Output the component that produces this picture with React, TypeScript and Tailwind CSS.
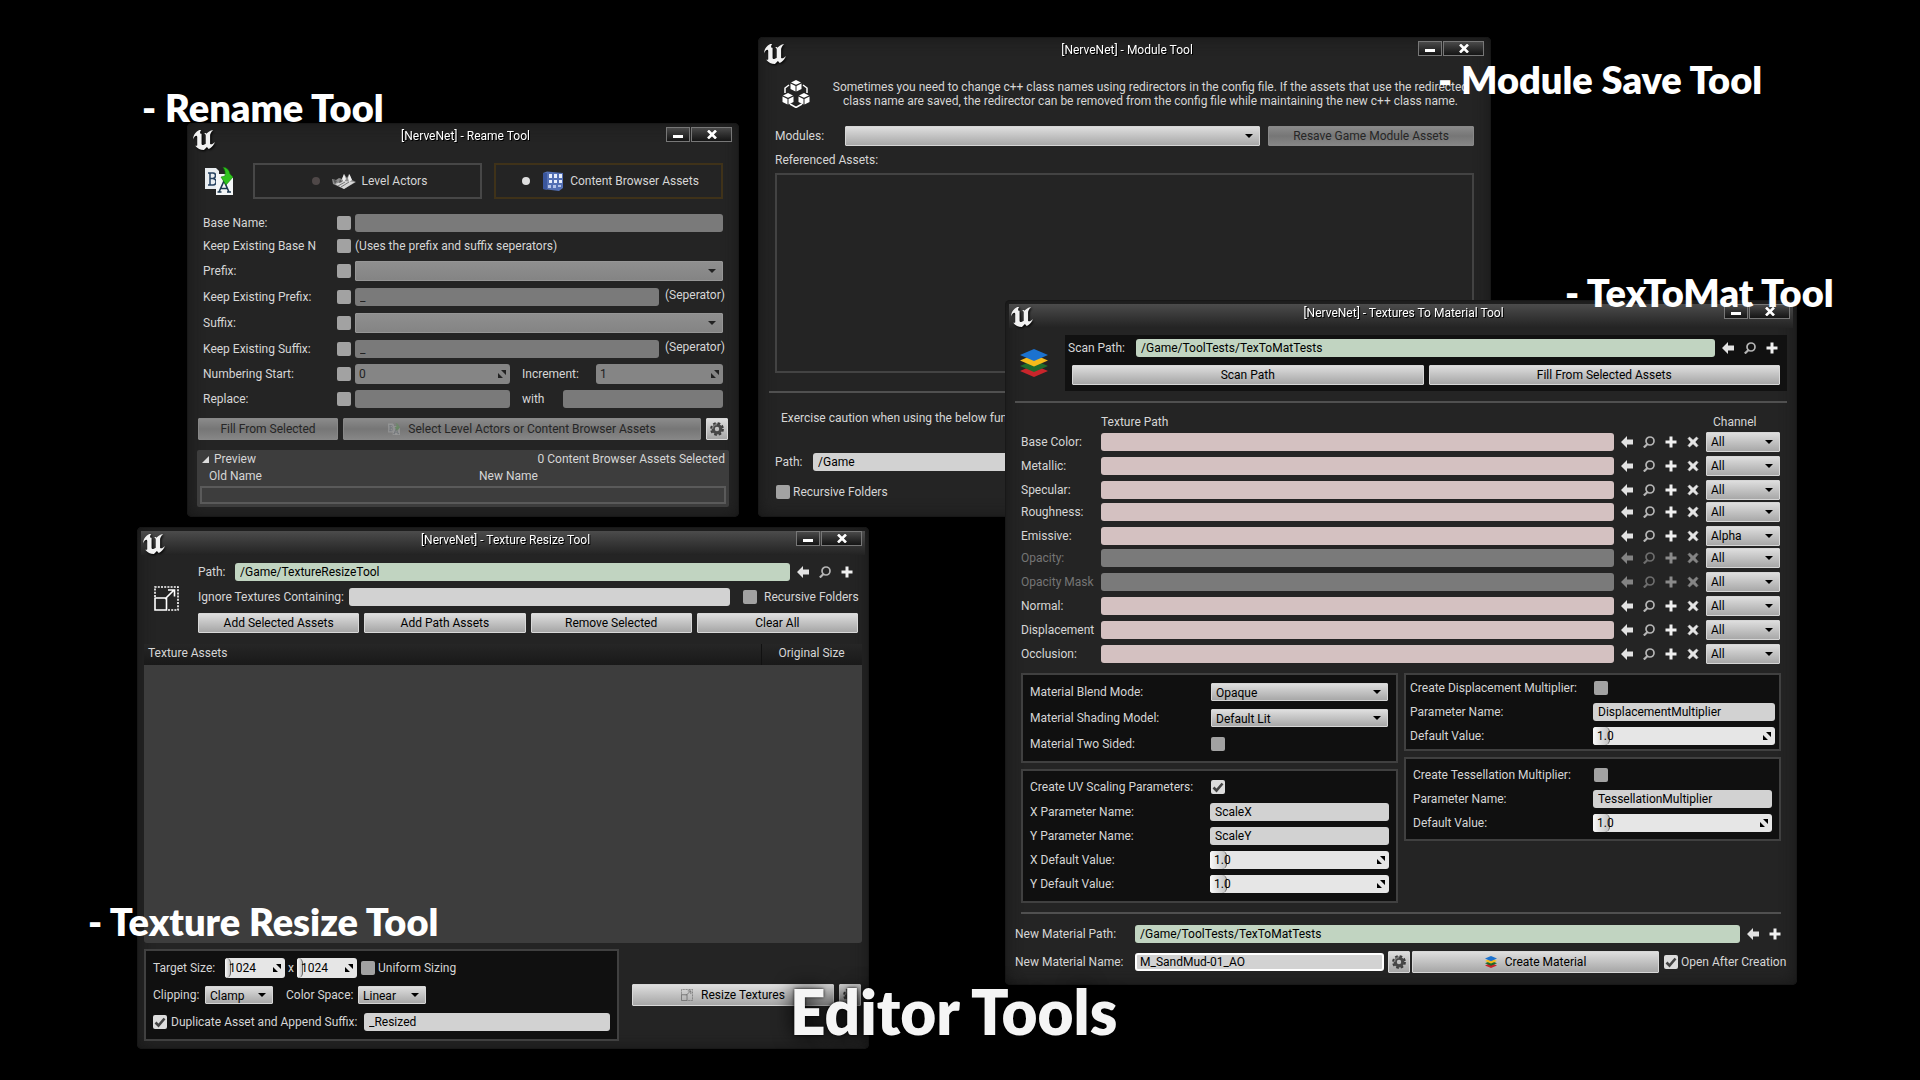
import React from 'react';
import clsx from 'clsx';

type BoxProps = { className?: string };

/* ---------- icons ---------- */

const UnrealLogo = () => (
  <svg viewBox="4.6 5.4 14.7 14" preserveAspectRatio="none" className="w-[22px] h-5 drop-shadow-[1px_1px_1px_#000]" fill="#f2f2f2">
    <path d="M19.13 13.729c-.206.997-1.126 3.557-4.06 4.942l-1.179-1.325-1.988 2a7.338 7.338 0 01-5.804-2.978 2.859 2.859 0 00.65.123c.326.006.678-.114.678-.66v-5.394a.89.89 0 00-1.116-.89c-.92.212-1.656 2.509-1.656 2.509a7.304 7.304 0 012.528-5.597 7.408 7.408 0 013.73-1.721c-1.006.573-1.57 1.507-1.57 2.29 0 1.262.76 1.109.984.923v7.28a1.157 1.157 0 00.148.256 1.075 1.075 0 00.88.445c.76 0 1.747-.868 1.747-.868V9.172c0-.6-.452-1.324-.905-1.572 0 0 .838-.149 1.484.346a5.537 5.537 0 01.387-.425c1.508-1.48 2.929-1.902 4.112-2.112 0 0-2.151 1.69-2.151 3.96 0 1.687.043 5.801.043 5.801.799.771 1.986-.342 3.059-1.441z" />
  </svg>
);

const RenameIcon = ({ className = 'w-7 h-7' }: BoxProps) => (
  <svg viewBox="0 0 28 28" className={className}>
    <path d="M0 1h11l3 3v18H0z" fill="#e9edf0" />
    <path d="M3 6h5q2.500 0 2.500 2.500T8 11.500Q11 12 11 14.500 11 18 8 18H3M5 6v12M5 11.500h3" fill="none" stroke="#233f5e" strokeWidth="1.500" />
    <path d="M11 7h13l4 4v17H11z" fill="#f4f6f7" />
    <path d="M14 25l5-11 5 11M16 21.500h6M12.500 25h4M22 25h4" fill="none" stroke="#1d3850" strokeWidth="1.600" />
    <path d="M18 0q6 1 7 7l3 3-7 8-5-8 4-1Q21 4 18 0z" fill="#2fc41d" stroke="#16790d" strokeWidth=".6" />
  </svg>
);

const LandscapeIcon = () => (
  <svg viewBox="0 0 24 16" className="w-6 h-4">
    <path d="M0 6l4 1 3-2 3 1 2-5 3 4 2-4 3 6 4 2-12 7-11-5z" fill="#8d8d8d" />
    <path d="M3 11l9-3 11 1-11 7z" fill="#d6d6d6" />
    <path d="M10 6l2-5 2 5-2 3zM16 5l1.500-4 2.500 6-3 2z" fill="#efefef" />
    <path d="M1 6l4 2-2 3zM8 6l2 3-3 1z" fill="#5c5c5c" />
    <path d="M6 13l7-4M9 14l8-5" stroke="#777" />
  </svg>
);

const AssetsIcon = () => (
  <svg viewBox="0 0 22 21" className="w-[22px] h-[21px]">
    <path d="M1 2l4-1.500 16 1.500v15l-4 3L1 18z" fill="#5470b4" />
    <path d="M1 2l4 0v17l-4-1z" fill="#3a569c" />
    <g fill="#e7edfb">
      <rect x="7" y="3" width="3" height="4" /><rect x="12" y="3" width="3" height="4" /><rect x="17" y="3" width="3" height="4" />
      <rect x="7" y="9" width="3" height="3" /><rect x="12" y="9" width="3" height="3" /><rect x="17" y="9" width="3" height="3" />
      <rect x="6" y="14" width="3" height="3" fill="#b3c3ea" /><rect x="11" y="14" width="3" height="3" fill="#b3c3ea" /><rect x="16" y="14" width="3" height="2" fill="#b3c3ea" />
    </g>
  </svg>
);

const Cube = ({ x, y }: { x: number; y: number }) => (
  <g fill="#fff">
    <path d={`M${x} ${y - 6}l5 2.500-5 2.300-5-2.300z`} />
    <path d={`M${x - 5.5} ${y - 2.5}l5 2.400v5.600l-5-2.500z`} />
    <path d={`M${x + 5.5} ${y - 2.5}l-5 2.400v5.600l5-2.500z`} />
  </g>
);

const ModuleIcon = () => (
  <svg viewBox="0 0 28 28" className="w-7 h-7 shrink-0">
    <path d="M7 5L3 8v5M21 5l4 3v5M8 24l6 3.500 6-3.500" fill="none" stroke="#fff" strokeWidth="1.500" />
    <Cube x={14} y={6} />
    <Cube x={6} y={19} />
    <Cube x={22} y={19} />
  </svg>
);

const LayersIcon = ({ className = 'w-7 h-7' }: BoxProps) => (
  <svg viewBox="0 0 28 28" className={className}>
    <path d="M0 22l14-6 14 6-14 6z" fill="#c9252b" />
    <path d="M0 17l14-6 14 6-14 6z" fill="#1f6a2c" />
    <path d="M0 11.500l14-6 14 6-14 6z" fill="#f5bb1b" />
    <path d="M0 6l14-6 14 6-14 6z" fill="#1b72cf" />
  </svg>
);

const ResizeIcon = ({ className = 'w-[25px] h-[25px] text-white' }: BoxProps) => (
  <svg viewBox="0 0 25 25" className={className} fill="none" stroke="currentColor" strokeWidth="1.600">
    <path d="M1 11V1h23v23H14" strokeDasharray="2 1.200" />
    <path d="M1 11.500v12.500h11.500V12H1M11 13l9-9M14 4h6.500v6.500" />
  </svg>
);

const Gear = () => (
  <svg viewBox="0 0 14 14" className="w-3.5 h-3.5">
    <circle cx="7" cy="7" r="5.800" fill="none" stroke="#3c3c3c" strokeWidth="2.200" strokeDasharray="2.600 1.950" />
    <circle cx="7" cy="7" r="3.800" fill="none" stroke="#484848" strokeWidth="3.200" />
    <path d="M7 2.500A4.500 4.500 0 002.500 7" fill="none" stroke="#808080" strokeWidth="1.500" />
  </svg>
);

const actionPaths = {
  use: <path d="M0 6l6-6v3.500h6v5H6V12z" fill="#e2e2e2" />,
  browse: (
    <g fill="none" stroke="#b5b5b5" strokeWidth="1.700">
      <circle cx="7" cy="5" r="4" />
      <path d="M4.500 8L.8 11.500" strokeWidth="2.200" />
    </g>
  ),
  add: <path d="M4.500.5h3v4h4v3h-4v4h-3v-4h-4v-3h4z" fill="#f0f0f0" />,
  clear: <path d="M2.500 1L6 4.200 9.500 1 11 2.500 8 6l3 3.500L9.500 11 6 7.800 2.500 11 1 9.500 4 6 1 2.500z" fill="#e6e6e6" stroke="#e6e6e6" strokeWidth=".6" />,
};

const actionLabels = { use: 'Use selected', browse: 'Browse', add: 'Add', clear: 'Clear' };

type Action = keyof typeof actionPaths;

const Actions = ({ list, off, className }: { list: Action[]; off?: boolean; className?: string }) => (
  <div className={clsx('flex gap-2.5 shrink-0 ml-[7px]', off && 'opacity-50', className)}>
    {list.map((a) => (
      <button key={a} type="button" aria-label={actionLabels[a]} disabled={off} className="w-3 h-3">
        <svg viewBox="0 0 12 12" className="w-3 h-3">{actionPaths[a]}</svg>
      </button>
    ))}
  </div>
);

/* ---------- controls ---------- */

const Label = ({ htmlFor, children, className }: { htmlFor?: string; children: React.ReactNode; className?: string }) => (
  <label htmlFor={htmlFor} className={clsx('shrink-0 whitespace-nowrap', className)}>{children}</label>
);

const tones = {
  light: 'bg-[#d2d2d2]',
  green: 'bg-[#c1d4c1]',
  pink: 'bg-[#d4c1c1]',
  off: 'bg-[#7a7a7a]',
  focus: 'bg-[#d2d2d2] border-2 border-white !px-[3px]',
};

interface TextProps {
  id: string;
  value?: string;
  tone?: keyof typeof tones;
  className?: string;
  label?: string;
}

const TextBox = ({ id, value = '', tone = 'light', className = 'flex-1', label }: TextProps) => (
  <input id={id} aria-label={label} type="text" defaultValue={value} disabled={tone === 'off'}
    className={clsx('h-[18px] min-w-0 rounded-[3px] px-[5px] text-black outline-none disabled:text-[#222]', tones[tone], className)} />
);

const Spin = ({ id, value, off, className = 'flex-1', height = 'h-[18px]', thumb = 'w-[17px]', label }: {
  id: string; value: string; off?: boolean; className?: string; height?: string; thumb?: string; label?: string;
}) => (
  <div className={clsx('relative min-w-0 rounded-[3px] overflow-hidden', height, off ? 'bg-[#858585]' : 'bg-[#e6e6e6]', className)}>
    {!off && <span className={clsx('absolute left-0 inset-y-0 rounded-r-[5px] border-r border-[#666] bg-linear-to-r from-[#fafafa] to-[#c4c4c4]', thumb)} />}
    <input id={id} aria-label={label} type="text" defaultValue={value} disabled={off}
      className={clsx('relative block w-full h-full px-1 bg-transparent outline-none', off ? 'text-[#222]' : 'text-black')} />
    <svg viewBox="0 0 8 8" className={clsx('absolute right-1 top-1/2 -mt-1 w-2 h-2', off ? 'text-[#222]' : 'text-black')}>
      <path d="M3 0h5v5zM0 3v5h5z" fill="currentColor" />
    </svg>
  </div>
);

const Check = ({ id, checked, label }: { id: string; checked?: boolean; label?: string }) => (
  <span className="relative w-3.5 h-3.5 shrink-0">
    <input id={id} type="checkbox" aria-label={label} defaultChecked={checked}
      className="peer block appearance-none w-3.5 h-3.5 rounded-[2px] bg-[#a2a2a2] checked:bg-[#dcdcdc]" />
    <svg viewBox="0 0 14 14" className="absolute inset-0 w-3.5 h-3.5 pointer-events-none opacity-0 peer-checked:opacity-100">
      <path d="M2.500 7.500l3 3L11.500 3.500" fill="none" stroke="#444" strokeWidth="2.600" />
    </svg>
  </span>
);

const Select = ({ id, value, off, className = 'flex-1', height = 'h-[18px]', label }: {
  id: string; value?: string; off?: boolean; className?: string; height?: string; label?: string;
}) => (
  <div className={clsx('relative min-w-0', height, className)}>
    <select id={id} aria-label={label} disabled={off}
      className={clsx('block appearance-none w-full h-full pl-1 rounded-[1px] border outline-none text-black disabled:opacity-100',
        off ? 'bg-linear-to-b from-[#8f8f8f] to-[#848484] border-[#969696]' : 'bg-linear-to-b from-[#dedede] to-[#a8a8a8] border-[#d6d6d6]')}>
      {value && <option>{value}</option>}
    </select>
    <svg viewBox="0 0 8 4" className={clsx('absolute right-[7px] top-1/2 -mt-0.5 w-2 h-1 pointer-events-none', off ? 'text-[#222]' : 'text-black')}>
      <path d="M0 0h8L4 4z" fill="currentColor" />
    </svg>
  </div>
);

const Button = ({ children, off, className, height = 'h-5', label }: {
  children?: React.ReactNode; off?: boolean; className?: string; height?: string; label?: string;
}) => (
  <button type="button" disabled={off} aria-label={label}
    className={clsx('flex items-center justify-center whitespace-nowrap rounded-[1px] border', height,
      off
        ? 'bg-linear-to-b from-[#8a8a8a] via-[#767676] to-[#868686] border-[#888] text-[#262626]'
        : 'bg-linear-to-b from-[#dedede] to-[#a6a6a6] border-[#d8d8d8] text-black', className)}>
    {children}
  </button>
);

const GearButton = () => (
  <Button label="Settings" height="h-[22px]" className="w-[22px] shrink-0"><Gear /></Button>
);

const Rule = ({ className }: BoxProps) => <div className={clsx('h-0.5 bg-[#505050]', className)} />;

/* ---------- window frame ---------- */

const ToolWindow = ({ title, active, className, children }: {
  title: string; active?: boolean; className: string; children: React.ReactNode;
}) => (
  <section className={clsx('absolute rounded-[5px] bg-[#242424] shadow-[inset_0_0_16px_#161616,inset_0_0_0_1px_#1a1a1a]', className)}>
    <header className={clsx('mx-1 mt-1 h-6 grid grid-cols-[74px_1fr_69px] items-start', active && 'bg-linear-to-b from-[#4c4c4c] to-[#232323]')}>
      <div className="pl-0.5 pt-[3px]"><UnrealLogo /></div>
      <h2 className="text-center leading-[18px] text-white drop-shadow-[1px_1px_0_#000]">{title}</h2>
      <div className="flex gap-px w-[66px] text-white">
        <button type="button" aria-label="Minimize" className="w-6 h-[15px] border border-[#777] bg-linear-to-b from-[#4a4a4a] to-[#151515] flex items-end justify-center pb-[3px]">
          <span className="w-2.5 h-[3px] bg-white" />
        </button>
        <button type="button" aria-label="Close" className="w-[41px] h-[15px] border border-[#777] bg-linear-to-b from-[#4a4a4a] to-[#151515] flex items-center justify-center">
          <svg viewBox="0 0 10 9" className="w-2.5 h-[9px]"><path d="M1 0.500l8 8M9 0.500l-8 8" stroke="#fff" strokeWidth="2.600" /></svg>
        </button>
      </div>
    </header>
    {children}
  </section>
);

const Panel = ({ className, children }: { className?: string; children: React.ReactNode }) => (
  <div className={clsx('border-2 border-[#404040] bg-[#101010]', className)}>{children}</div>
);

/* ---------- rename tool ---------- */

const RenameRow = ({ id, label, height = 'h-6', children }: { id: string; label: string; height?: string; children: React.ReactNode }) => (
  <div className={clsx('flex items-center', height)}>
    <Label htmlFor={id} className="w-[134px]">{label}</Label>
    <Check id={id} />
    <div className="flex flex-1 items-center min-w-0 ml-1">{children}</div>
  </div>
);

const SourceOption = ({ icon, label, selected }: { icon: React.ReactNode; label: string; selected?: boolean }) => (
  <label className={clsx('flex-1 h-9 flex items-center justify-center border-2 gap-1.5 pl-1', selected ? 'border-[#3f3219]' : 'border-[#474747]')}>
    <input type="radio" name="source" defaultChecked={selected}
      className="appearance-none w-2 h-2 mr-1.5 rounded-full bg-[#4f4848] checked:bg-[#dedede]" />
    {icon}
    <span>{label}</span>
  </label>
);

const Separator = () => <span className="mb-1 pl-1.5 w-16 shrink-0 whitespace-nowrap">(Seperator)</span>;

const RenameTool = () => (
  <ToolWindow title="[NerveNet] - Reame Tool" className="left-[187px] top-[123px] w-[552px]">
    <div className="pt-3 pl-[18px] pr-4 flex items-center">
      <RenameIcon className="w-7 h-7 mr-5 shrink-0" />
      <div className="flex flex-1 gap-3">
        <SourceOption icon={<LandscapeIcon />} label="Level Actors" />
        <SourceOption icon={<AssetsIcon />} label="Content Browser Assets" selected />
      </div>
    </div>

    <div className="mt-3 px-4">
      <RenameRow id="base" label="Base Name:"><TextBox id="base-v" tone="off" label="Base name" /></RenameRow>
      <RenameRow id="keep-base" label="Keep Existing Base N" height="h-[22px]">(Uses the prefix and suffix seperators)</RenameRow>
      <RenameRow id="prefix" label="Prefix:" height="h-7"><Select id="prefix-v" off height="h-5" label="Prefix" /></RenameRow>
      <RenameRow id="keep-prefix" label="Keep Existing Prefix:"><TextBox id="keep-prefix-v" tone="off" value="_" label="Prefix separator" /><Separator /></RenameRow>
      <RenameRow id="suffix" label="Suffix:" height="h-7"><Select id="suffix-v" off height="h-5" label="Suffix" /></RenameRow>
      <RenameRow id="keep-suffix" label="Keep Existing Suffix:"><TextBox id="keep-suffix-v" tone="off" value="_" label="Suffix separator" /><Separator /></RenameRow>
      <RenameRow id="numbering" label="Numbering Start:" height="h-[26px]">
        <Spin id="numbering-v" value="0" off height="h-5" className="w-[155px]" label="Numbering start" />
        <Label htmlFor="increment" className="ml-3">Increment:</Label>
        <Spin id="increment" value="1" off height="h-5" className="w-[127px] ml-auto" />
      </RenameRow>
      <RenameRow id="replace" label="Replace:">
        <TextBox id="replace-v" tone="off" className="w-[155px]" label="Replace text" />
        <Label htmlFor="with" className="ml-3">with</Label>
        <TextBox id="with" tone="off" className="w-[160px] ml-auto" />
      </RenameRow>
    </div>

    <div className="mt-[7px] mx-[11px] flex gap-[5px]">
      <Button off height="h-[22px]" className="w-[140px]">Fill From Selected</Button>
      <Button off height="h-[22px]" className="flex-1">
        <RenameIcon className="w-3 h-3 mr-2 opacity-20" />Select Level Actors or Content Browser Assets
      </Button>
      <GearButton />
    </div>

    <div className="mt-2.5 mx-2.5 mb-2.5 rounded-[2px] bg-[#3d3d3d] pb-[3px]">
      <div className="flex items-center h-[18px] pl-[5px] pr-1">
        <svg viewBox="0 0 7 7" className="w-[7px] h-[7px] mr-[5px]"><path d="M7 0v7H0z" fill="#ddd" /></svg>
        <span>Preview</span>
        <span className="ml-auto">0 Content Browser Assets Selected</span>
      </div>
      <div className="flex h-[18px] leading-4 pl-3">
        <span className="w-[270px]">Old Name</span>
        <span>New Name</span>
      </div>
      <div className="mx-[3px] h-[18px] border-2 border-[#5a5a5a]" />
    </div>
  </ToolWindow>
);

/* ---------- module tool ---------- */

const ModuleTool = () => (
  <ToolWindow title="[NerveNet] - Module Tool" className="left-[758px] top-[37px] w-[733px] pb-[17px]">
    <div className="pt-[15px] pl-6 pr-4 flex items-center gap-4">
      <ModuleIcon />
      <p className="flex-1 text-center leading-[14px] whitespace-nowrap">
        Sometimes you need to change c++ class names using redirectors in the config file. If the assets that use the redirected
        <br />
        class name are saved, the redirector can be removed from the config file while maintaining the new c++ class name.
      </p>
    </div>
    <div className="mt-[18px] px-[17px]">
      <div className="flex items-center">
        <Label htmlFor="modules" className="w-[70px]">Modules:</Label>
        <Select id="modules" height="h-5" />
        <Button off className="w-[206px] ml-2">Resave Game Module Assets</Button>
      </div>
      <p className="mt-1.5 leading-4">Referenced Assets:</p>
      <div className="mt-[5px] h-[200px] border-2 border-[#434343]" />
    </div>
    <Rule className="mt-[18px] mx-[11px]" />
    <p className="mt-[17px] pl-[23px] leading-4 whitespace-nowrap">Exercise caution when using the below functions.</p>
    <div className="mt-[27px] px-[17px] flex items-center">
      <Label htmlFor="module-path" className="w-[38px]">Path:</Label>
      <TextBox id="module-path" value="/Game" />
    </div>
    <div className="mt-[13px] px-[18px] h-4 flex items-center gap-[3px]">
      <Check id="module-recursive" />
      <Label htmlFor="module-recursive">Recursive Folders</Label>
    </div>
  </ToolWindow>
);

/* ---------- texture resize tool ---------- */

const TextureResizeTool = () => (
  <ToolWindow title="[NerveNet] - Texture Resize Tool" active className="left-[137px] top-[527px] w-[732px] pb-2">
    <div className="pt-2 pl-[17px] pr-[11px] flex items-center gap-[19px]">
      <ResizeIcon className="w-[25px] h-[25px] shrink-0 text-white" />
      <div className="flex-1">
        <div className="flex items-center h-[18px] pr-[5px]">
          <Label htmlFor="resize-path" className="w-[37px]">Path:</Label>
          <TextBox id="resize-path" tone="green" value="/Game/TextureResizeTool" />
          <Actions list={['use', 'browse', 'add']} />
        </div>
        <div className="mt-[7px] flex items-center h-[18px]">
          <Label htmlFor="ignore" className="w-[151px]">Ignore Textures Containing:</Label>
          <TextBox id="ignore" className="flex-1 mr-[13px]" />
          <Check id="resize-recursive" />
          <Label htmlFor="resize-recursive" className="w-[101px] pl-[7px]">Recursive Folders</Label>
        </div>
        <div className="mt-[7px] grid grid-cols-4 gap-[5px]">
          <Button>Add Selected Assets</Button>
          <Button>Add Path Assets</Button>
          <Button>Remove Selected</Button>
          <Button>Clear All</Button>
        </div>
      </div>
    </div>

    <div className="mt-[11px] mx-[7px] h-[299px] rounded-b-[3px] bg-[#3d3d3d]">
      <table className="w-full text-left leading-[18px]">
        <thead>
          <tr className="h-[21px] align-top bg-linear-to-b from-[#262626] to-[#191919]">
            <th className="align-top font-normal pl-1 py-0">Texture Assets</th>
            <th className="align-top font-normal pl-[17px] py-0 w-[101px] border-l border-[#111]">Original Size</th>
          </tr>
        </thead>
      </table>
    </div>

    <div className="mt-1.5 pl-[7px] pr-2 flex items-center">
      <Panel className="w-[475px] pt-[7px] px-[7px] pb-2">
        <div className="flex items-center h-5">
          <Label htmlFor="size-x" className="w-[72px]">Target Size:</Label>
          <Spin id="size-x" value="1024" height="h-5" className="w-[60px] flex-none" thumb="w-1.5" />
          <span className="w-3 text-center">x</span>
          <Spin id="size-y" value="1024" height="h-5" className="w-[60px] flex-none mr-1" thumb="w-1.5" label="Target height" />
          <Check id="uniform" />
          <Label htmlFor="uniform" className="ml-[3px]">Uniform Sizing</Label>
        </div>
        <div className="mt-2 flex items-center h-[18px]">
          <Label htmlFor="clipping" className="w-[52px]">Clipping:</Label>
          <Select id="clipping" value="Clamp" className="w-[68px] mr-[13px]" />
          <Label htmlFor="color-space" className="w-[72px]">Color Space:</Label>
          <Select id="color-space" value="Linear" className="w-[68px]" />
        </div>
        <div className="mt-[9px] flex items-center h-[18px]">
          <Check id="duplicate" checked />
          <Label htmlFor="duplicate" className="w-[197px] pl-1">Duplicate Asset and Append Suffix:</Label>
          <TextBox id="append" value="_Resized" label="Suffix to append" />
        </div>
      </Panel>
      <div className="flex flex-1 gap-[5px] ml-[13px]">
        <Button height="h-[22px]" className="flex-1">
          <ResizeIcon className="w-3 h-3 mr-2 text-[#666]" />Resize Textures
        </Button>
        <GearButton />
      </div>
    </div>
  </ToolWindow>
);

/* ---------- textures to material tool ---------- */

interface Slot {
  name: string;
  channel?: string;
  off?: boolean;
  tight?: boolean;
}

const slots: Slot[] = [
  { name: 'Base Color:' },
  { name: 'Metallic:' },
  { name: 'Specular:', tight: true },
  { name: 'Roughness:' },
  { name: 'Emissive:', channel: 'Alpha', tight: true },
  { name: 'Opacity:', off: true },
  { name: 'Opacity Mask', off: true },
  { name: 'Normal:' },
  { name: 'Displacement' },
  { name: 'Occlusion:' },
];

const SlotRow = ({ slot, index }: { slot: Slot; index: number }) => (
  <div className={slot.tight ? 'h-[22px]' : 'h-6'}>
    <div className="flex items-center h-5">
      <Label htmlFor={`slot-${index}`} className={clsx('w-20', slot.off && 'text-[#757575]')}>{slot.name}</Label>
      <TextBox id={`slot-${index}`} tone={slot.off ? 'off' : 'pink'} />
      <Actions list={['use', 'browse', 'add', 'clear']} off={slot.off} className="mr-[7px]" />
      <Select id={`channel-${index}`} value={slot.channel ?? 'All'} height="h-5" className="w-[74px]" label={`${slot.name} channel`} />
    </div>
  </div>
);

const Field = ({ id, label, width, height = 'h-6', children }: {
  id: string; label: string; width: string; height?: string; children: React.ReactNode;
}) => (
  <div className={clsx('flex items-center', height)}>
    <Label htmlFor={id} className={width}>{label}</Label>
    {children}
  </div>
);

const TexToMatTool = () => (
  <ToolWindow title="[NerveNet] - Textures To Material Tool" active className="left-[1005px] top-[300px] w-[792px] pb-3">
    <div className="pt-[7px] pl-[15px] pr-2.5 flex items-center gap-[17px]">
      <LayersIcon className="w-7 h-7 shrink-0" />
      <div className="flex-1 bg-[#111] pt-1 pb-1.5">
        <div className="flex items-center h-[18px] pl-[3px] pr-[9px]">
          <Label htmlFor="scan-path" className="w-[68px]">Scan Path:</Label>
          <TextBox id="scan-path" tone="green" value="/Game/ToolTests/TexToMatTests" />
          <Actions list={['use', 'browse', 'add']} />
        </div>
        <div className="mt-2 mx-[7px] grid grid-cols-2 gap-[5px]">
          <Button>Scan Path</Button>
          <Button>Fill From Selected Assets</Button>
        </div>
      </div>
    </div>
    <Rule className="mt-2.5 mx-2.5" />

    <div className="mt-[11px] pl-4 pr-[17px]">
      <div className="flex leading-4 mb-0.5">
        <span className="pl-20 flex-1">Texture Path</span>
        <span className="w-[67px]">Channel</span>
      </div>
      {slots.map((slot, i) => <SlotRow key={slot.name} slot={slot} index={i} />)}
    </div>

    <div className="mt-[5px] px-4 grid grid-cols-2 gap-1.5 items-start">
      <div className="flex flex-col gap-1.5">
        <Panel className="py-1 pl-[7px] pr-2">
          <Field id="blend" label="Material Blend Mode:" width="w-[181px]" height="h-[26px]"><Select id="blend" value="Opaque" /></Field>
          <Field id="shading" label="Material Shading Model:" width="w-[181px]" height="h-[26px]"><Select id="shading" value="Default Lit" /></Field>
          <Field id="two-sided" label="Material Two Sided:" width="w-[181px]" height="h-[26px]"><Check id="two-sided" /></Field>
        </Panel>
        <Panel className="pt-[3px] pb-[5px] px-[7px]">
          <Field id="uv" label="Create UV Scaling Parameters:" width="w-[181px]" height="h-[26px]"><Check id="uv" checked /></Field>
          <Field id="x-name" label="X Parameter Name:" width="w-[180px]"><TextBox id="x-name" value="ScaleX" /></Field>
          <Field id="y-name" label="Y Parameter Name:" width="w-[180px]"><TextBox id="y-name" value="ScaleY" /></Field>
          <Field id="x-value" label="X Default Value:" width="w-[180px]"><Spin id="x-value" value="1.0" /></Field>
          <Field id="y-value" label="Y Default Value:" width="w-[180px]"><Spin id="y-value" value="1.0" /></Field>
        </Panel>
      </div>
      <div className="flex flex-col gap-1.5">
        <Panel className="py-px px-1">
          <Field id="disp" label="Create Displacement Multiplier:" width="w-[184px]"><Check id="disp" /></Field>
          <Field id="disp-name" label="Parameter Name:" width="w-[183px]"><TextBox id="disp-name" value="DisplacementMultiplier" /></Field>
          <Field id="disp-value" label="Default Value:" width="w-[183px]"><Spin id="disp-value" value="1.0" /></Field>
        </Panel>
        <Panel className="py-1 px-[7px]">
          <Field id="tess" label="Create Tessellation Multiplier:" width="w-[181px]"><Check id="tess" /></Field>
          <Field id="tess-name" label="Parameter Name:" width="w-[180px]"><TextBox id="tess-name" value="TessellationMultiplier" /></Field>
          <Field id="tess-value" label="Default Value:" width="w-[180px]"><Spin id="tess-value" value="1.0" /></Field>
        </Panel>
      </div>
    </div>
    <Rule className="mt-[9px] mx-4" />

    <div className="mt-[11px] pl-2.5 pr-4 flex items-center h-[18px]">
      <Label htmlFor="mat-path" className="w-[120px]">New Material Path:</Label>
      <TextBox id="mat-path" tone="green" value="/Game/ToolTests/TexToMatTests" />
      <Actions list={['use', 'add']} />
    </div>
    <div className="mt-2 px-2.5 flex items-center h-[22px]">
      <Label htmlFor="mat-name" className="w-[120px]">New Material Name:</Label>
      <TextBox id="mat-name" tone="focus" value="M_SandMud-01_AO" className="w-[249px] mr-1" />
      <GearButton />
      <Button height="h-[22px]" className="flex-1 ml-0.5 mr-[5px]">
        <LayersIcon className="w-3 h-3 mr-2" />Create Material
      </Button>
      <Check id="open-after" checked />
      <Label htmlFor="open-after" className="w-[109px] pl-[3px]">Open After Creation</Label>
    </div>
  </ToolWindow>
);

/* ---------- captions ---------- */

const Caption = ({ className, children }: { className: string; children: React.ReactNode }) => (
  <p className={clsx("absolute font-['Lato',sans-serif] font-extrabold text-[38px] leading-[48px] text-white whitespace-nowrap", className)}>{children}</p>
);

export default function App() {
  return (
    <main className="relative w-full min-h-screen overflow-hidden bg-black font-['Roboto',sans-serif] text-[12px] text-[#d6d6d6]">
      <ModuleTool />
      <RenameTool />
      <TextureResizeTool />
      <TexToMatTool />

      <Caption className="left-[142px] top-[83px]">- Rename Tool</Caption>
      <Caption className="left-[1438px] top-[55px]">- Module Save Tool</Caption>
      <Caption className="left-[1565px] top-[268px]">- TexToMat Tool</Caption>
      <Caption className="left-[88px] top-[897px]">- Texture Resize Tool</Caption>
      <h1 className="absolute left-[790px] top-[973px] font-['Lato',sans-serif] font-extrabold text-[62px] leading-[76px] text-[#f5f5f5] whitespace-nowrap [text-shadow:0_0_3px_#000,0_0_20px_#000]">Editor Tools</h1>
    </main>
  );
}
